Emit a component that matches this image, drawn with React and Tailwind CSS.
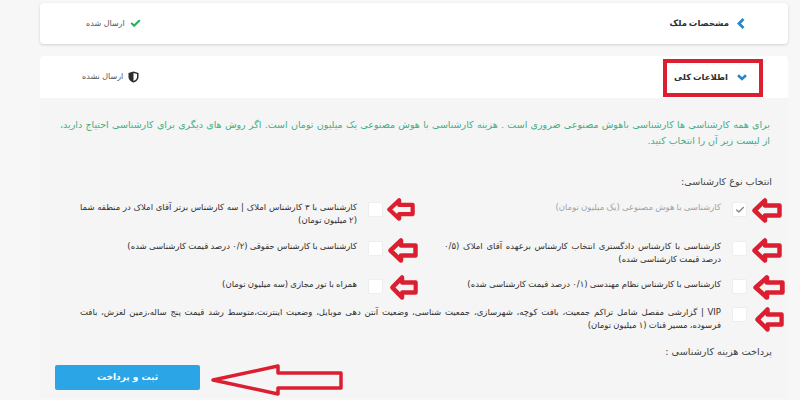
import { Check } from 'lucide-react'

const options = [
  { label: 'کارشناسی با هوش مصنوعی (یک میلیون تومان)', checked: true, h: 'h-[39px]' },
  { label: 'کارشناسی با ۳ کارشناس املاک | سه کارشناس برتر آقای املاک در منطقه شما (۲ میلیون تومان)', h: 'h-[39px]' },
  { label: 'کارشناسی با کارشناس دادگستری انتخاب کارشناس برعهده آقای املاک (۰/۵ درصد قیمت کارشناسی شده)', h: 'h-[38px]' },
  { label: 'کارشناسی با کارشناس حقوقی (۰/۲ درصد قیمت کارشناسی شده)', h: 'h-[38px]' },
  { label: 'کارشناسی با کارشناس نظام مهندسی (۰/۱ درصد قیمت کارشناسی شده)', h: 'h-[28px]' },
  { label: 'همراه با تور مجازی (سه میلیون تومان)', h: 'h-[28px]' },
]

const vipLabel =
  'VIP | گزارشی مفصل شامل تراکم جمعیت، بافت کوچه، شهرسازی، جمعیت شناسی، وضعیت آنتن دهی موبایل، وضعیت اینترنت،متوسط رشد قیمت پنج ساله،زمین لغزش، بافت فرسوده،\u00a0مسیر قنات (۱ میلیون تومان)'

const arrows = [
  'left-[752px] top-[198px] w-[30px] h-[25px]',
  'left-[752px] top-[238px] w-[30px] h-[25px]',
  'left-[753px] top-[275px] w-[32px] h-[25px]',
  'left-[755px] top-[307px] w-[29px] h-[25px]',
  'left-[387px] top-[198px] w-[28px] h-[23px]',
  'left-[388px] top-[238px] w-[30px] h-[25px]',
  'left-[390px] top-[275px] w-[28px] h-[25px]',
]

const RedArrow = ({ className }) => (
  <svg className={`absolute ${className}`} viewBox="0 0 30 25" preserveAspectRatio="none" fill="none">
    <path d="M2.5 12.5 L13 2.5 V7.5 H27.5 V17.5 H13 V22.5 Z" stroke="#dc1f30" strokeWidth="4.5" strokeLinejoin="round" />
  </svg>
)

const Option = ({ label, checked, h }) => (
  <div className={`flex items-start gap-[11px] ${h}`}>
    <span className="mt-[1px] flex w-[15px] h-[15px] shrink-0 items-center justify-center rounded-[2px] bg-white border border-[#eeeeee]">
      {checked && <Check className="w-[10px] h-[10px] text-[#8a8a8a]" strokeWidth={3.5} />}
    </span>
    <span className={`text-[8.5px] leading-[13px] text-justify [word-spacing:-0.5px] ${checked ? 'text-[#a3a3a3]' : 'text-[#303030]'}`}>{label}</span>
  </div>
)

export default function App() {
  return (
    <div className="relative h-[400px] overflow-hidden bg-[#f7f7f7]" style={{ fontFamily: '"DejaVu Sans", sans-serif' }}>
      <div dir="rtl" className="flex flex-col pt-[3px] pb-[2px] pr-[12px] pl-[40px] h-full">
        {/* first step, already sent */}
        <div className="flex items-center justify-between h-[41px] shrink-0 rounded-[4px] bg-white shadow-[0_1px_3px_rgba(0,0,0,0.16)] pr-[43px] pl-[46px]">
          <div className="flex items-center gap-[8px]">
            <svg className="w-[8px] h-[11px]" viewBox="0 0 8 11" fill="none">
              <path d="M6.5 1 L2 5.5 L6.5 10" stroke="#2b86c9" strokeWidth="2.8" />
            </svg>
            <span className="text-[8.5px] font-bold text-[#2f2f2f] [word-spacing:-1px]">مشخصات ملک</span>
          </div>
          <div className="flex items-center gap-[5px]">
            <Check className="w-[11px] h-[11px] text-[#27ae60]" strokeWidth={4.5} />
            <span className="text-[8px] text-[#555555]">ارسال شده</span>
          </div>
        </div>

        {/* second step, open */}
        <div className="mt-[12px] flex flex-col flex-1 min-h-0 rounded-t-[4px] overflow-hidden">
          <div className="flex items-center justify-between h-[42px] shrink-0 bg-white pr-[41px] pl-[42px]">
            <div className="flex items-center gap-[9px]">
              <svg className="w-[10px] h-[7px]" viewBox="0 0 10 7" fill="none">
                <path d="M1 1.2 L5 5 L9 1.2" stroke="#2b86c9" strokeWidth="2.6" />
              </svg>
              <span className="text-[8.5px] font-bold text-[#2f2f2f] [word-spacing:-1px]">اطلاعات کلی</span>
            </div>
            <div className="flex items-center gap-[5px]">
              <svg className="w-[11px] h-[12px]" viewBox="0 0 11 12">
                <path d="M5.5 0.5 L10.5 2 V6 C10.5 9 8 10.8 5.5 11.5 C3 10.8 0.5 9 0.5 6 V2 Z" fill="#2c2c2c" />
                <path d="M5.5 2 L9 3 V6 C9 8 7.5 9.3 5.5 10 Z" fill="#ffffff" />
              </svg>
              <span className="text-[8px] text-[#555555]">ارسال نشده</span>
            </div>
          </div>

          <div className="flex-1 bg-[#f5f5f5] pt-[19px] pr-[16px] pl-[20px]">
            <p className="pr-[2px] text-[9.5px] leading-[16px] text-[#45ad83] text-justify">
              برای همه کارشناسی ها کارشناسی باهوش مصنوعی ضروری است . هزینه کارشناسی با هوش مصنوعی یک میلیون تومان است. اگر روش های دیگری برای کارشناسی احتیاج دارید، از لیست زیر آن را انتخاب کنید.
            </p>

            <div className="mt-[25px] text-[9.6px] leading-[16px] text-[#444444]">انتخاب نوع کارشناسی:</div>

            <div className="mt-[11px] pr-[25px] pl-[20px] grid grid-cols-2 gap-x-[61px]">
              {options.map((opt) => (
                <Option key={opt.label} {...opt} />
              ))}
            </div>
            <div className="pr-[25px] pl-[20px]">
              <Option label={vipLabel} h="h-[38px]" />
            </div>

            <div className="text-[9.7px] leading-[16px] text-[#444444]">پرداخت هزینه کارشناسی :</div>

            <div className="mt-[5px] flex justify-end">
              <button className="w-[145px] h-[25px] -ml-[5px] rounded-[2px] bg-[#2ca5e6] text-[9px] font-bold text-white">ثبت و پرداخت</button>
            </div>
          </div>
        </div>
      </div>

      {/* red annotations drawn over the screenshot */}
      <div className="absolute left-[663px] top-[59px] w-[100px] h-[38px] border-[4px] border-[#dc1f30]" />
      {arrows.map((cls) => (
        <RedArrow key={cls} className={cls} />
      ))}
      <svg className="absolute left-[210px] top-[363px] w-[134px] h-[33px]" viewBox="0 0 134 33" fill="none">
        <path d="M3 17 L68 3 V10 H131 V25 H68 V31 Z" stroke="#dc1f30" strokeWidth="3.5" strokeLinejoin="round" />
      </svg>
    </div>
  )
}
